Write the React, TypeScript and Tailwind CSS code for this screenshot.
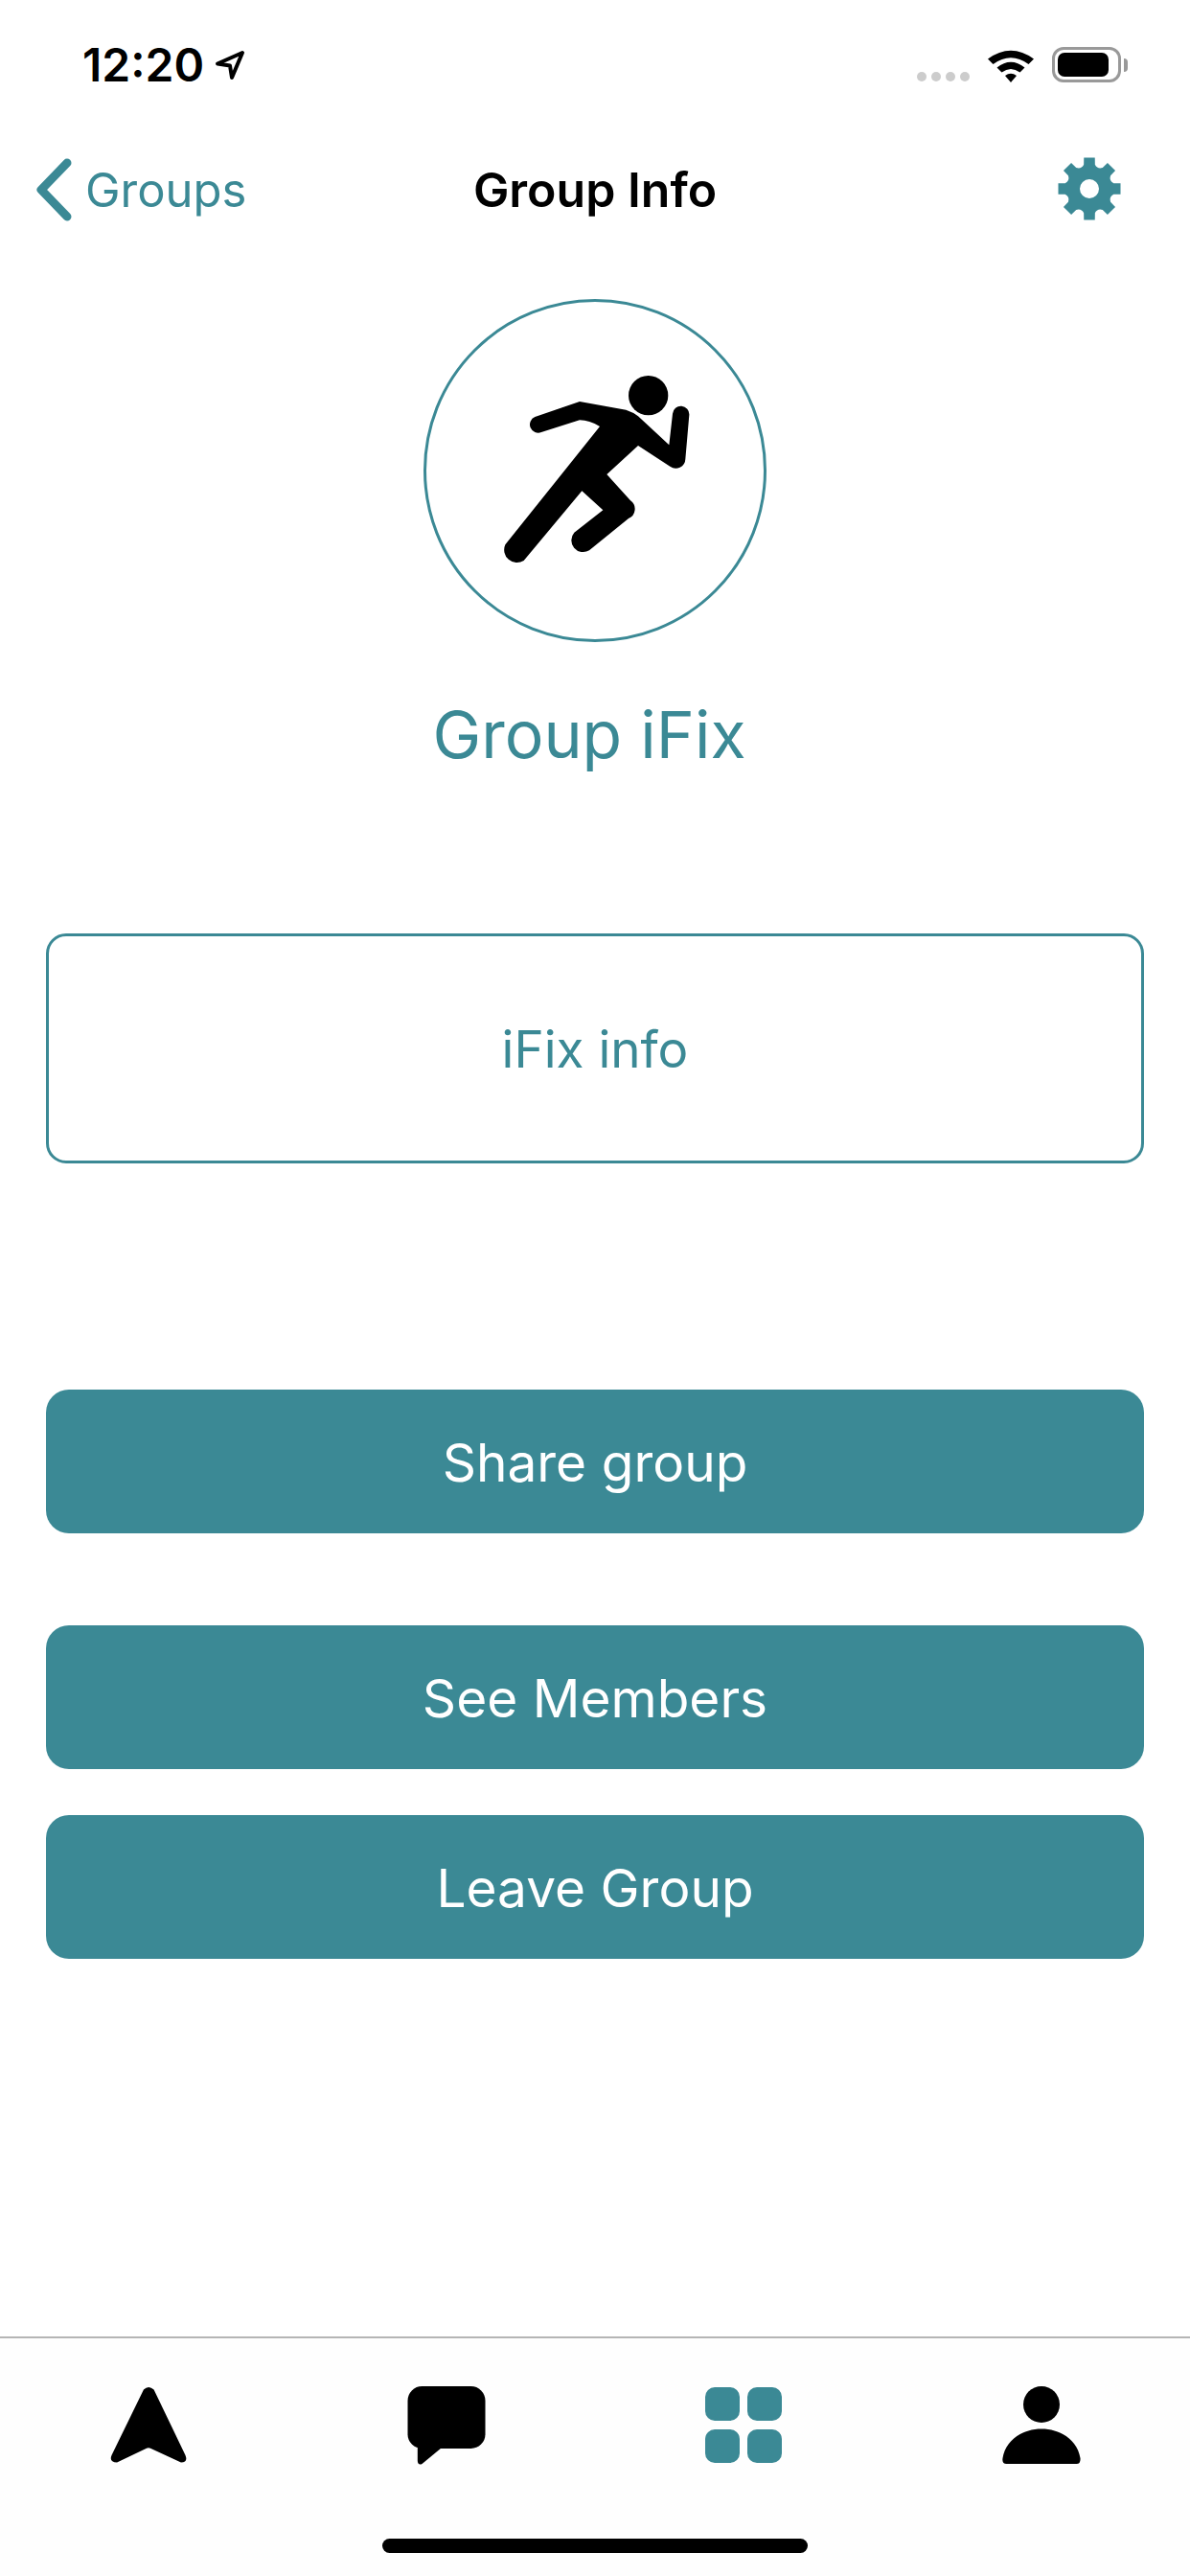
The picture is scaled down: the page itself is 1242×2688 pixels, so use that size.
const FONT = "font-['Inter','Liberation_Sans',sans-serif]";

function gearPath() {
  // 8 teeth round the centre of a 66 box
  const pt = (r: number, deg: number) => {
    const a = (deg * Math.PI) / 180;
    return `${(33 + r * Math.cos(a)).toFixed(2)} ${(33 + r * Math.sin(a)).toFixed(2)}`;
  };
  let d = "";
  for (let i = 0; i < 8; i++) {
    const c = i * 45 - 90;
    d += `${i === 0 ? "M" : "L"}${pt(26, c - 13)} L${pt(33, c - 10)} L${pt(33, c + 10)} L${pt(26, c + 13)} Q${pt(22, c + 22.5)} ${pt(26, c + 32)} `;
  }
  return `${d}Z M33 23 A10 10 0 1 0 33 43 A10 10 0 1 0 33 23 Z`;
}

function StatusBar() {
  return (
    <div className="flex h-[132px] items-start justify-between pl-[86px] pr-[65px] pt-[41px]">
      <div className="flex items-center gap-[11px]">
        <span className="text-[48px] leading-[54px] font-semibold text-black">12:20</span>
        <svg width="32" height="32" viewBox="0 0 32 32" fill="none">
          <path d="M29 3 L3 14.5 L16 16.5 L18 29 Z" stroke="#000" strokeWidth="4" strokeLinejoin="round" />
        </svg>
      </div>
      <div className="flex items-end gap-[19px] pt-[8px]">
        <div className="flex gap-[5px] pb-[1px]">
          <div className="size-[10px] rounded-full bg-[#cccccc]" />
          <div className="size-[10px] rounded-full bg-[#cccccc]" />
          <div className="size-[10px] rounded-full bg-[#cccccc]" />
          <div className="size-[10px] rounded-full bg-[#cccccc]" />
        </div>
        <svg width="48" height="36" viewBox="0 0 48 36" fill="none">
          <path d="M0 11.5 Q24 -6 48 11.5 L42.5 17 Q24 3.5 5.5 17 Z" fill="#000" />
          <path d="M9.5 20.5 Q24 9 38.5 20.5 L33.5 25.5 Q24 18.5 14.5 25.5 Z" fill="#000" />
          <path d="M18 29 Q24 24.5 30 29 L24 36 Z" fill="#000" />
        </svg>
        <div className="flex items-center gap-[3px]">
          <div className="flex h-[37px] w-[72px] items-center rounded-[12px] border-[3px] border-[#999999] pl-[3px]">
            <div className="h-[25px] w-[53px] rounded-[7px] bg-black" />
          </div>
          <div className="h-[14px] w-[4px] rounded-r-full bg-[#999999]" />
        </div>
      </div>
    </div>
  );
}

function NavBar() {
  return (
    <div className="grid h-[132px] grid-cols-3 items-center">
      <div className="flex items-center gap-[12px] pl-[37px]">
        <svg width="40" height="66" viewBox="0 0 40 66" fill="none">
          <path d="M33 5 L6 33 L33 61" stroke="#3b8995" strokeWidth="9" strokeLinecap="round" strokeLinejoin="round" />
        </svg>
        <span className="text-[49px] leading-none text-[#3b8995]">Groups</span>
      </div>
      <div className="text-center text-[50px] leading-none font-semibold text-black">Group Info</div>
      <div className="flex justify-end pb-[2px] pr-[72px]">
        <svg width="66" height="66" viewBox="0 0 66 66">
          <path d={gearPath()} fill="#3b8995" fillRule="evenodd" />
        </svg>
      </div>
    </div>
  );
}

function Runner() {
  return (
    <svg width="196" height="200" viewBox="312 298 588 600" className="ml-[2px]">
      <circle cx="770" cy="363" r="62" fill="#000" />
      <path
        d="M415 430 L555 382 L700 408 Q722 415 738 428 L835 518 L846 420 A26 26 0 0 1 898 424 L886 562 A30 30 0 0 1 838 585 L738 520 L640 610 L714 692 A32 32 0 0 1 708 748 L585 848 A37 37 0 0 1 538 792 L628 722 L562 662 L380 880 A40 40 0 0 1 322 830 L618 460 Q585 440 555 440 L435 478 A25 25 0 0 1 415 430 Z"
        fill="#000"
      />
    </svg>
  );
}

function ActionButton({ label, className }: { label: string; className: string }) {
  return (
    <button className={`flex h-[150px] w-full items-center justify-center rounded-[24px] bg-[#3b8995] pt-[3px] text-[55px] leading-none text-white ${className}`}>
      {label}
    </button>
  );
}

function TabBar() {
  return (
    <div className="mt-auto flex h-[250px] flex-col border-t-2 border-[#b5b5b5] bg-[#fefefe]">
      <div className="grid grid-cols-4 justify-items-center pt-[50px]">
        <svg width="80" height="80" viewBox="0 0 78 79">
          <path
            d="M34 3.5 Q39 -1.5 44.5 3.5 L77 71 Q80 78 72.5 78.5 L41 64 Q39 62.8 37 64 L6.5 78.5 Q-2 78 1 71 Z"
            fill="#000"
          />
        </svg>
        <svg width="82" height="82" viewBox="0 0 81 82">
          <rect x="0" y="0" width="81" height="65" rx="15" fill="#000" />
          <path d="M10.3 60 L10.3 78 Q11 83 15 81 L38 62 Z" fill="#000" />
        </svg>
        <svg width="80" height="80" viewBox="0 0 80 80" fill="#3b8995">
          <rect x="0" y="1" width="36" height="35" rx="10" />
          <rect x="44" y="1" width="36" height="35" rx="10" />
          <rect x="0" y="45" width="36" height="35" rx="10" />
          <rect x="44" y="45" width="36" height="35" rx="10" />
        </svg>
        <svg width="82" height="82" viewBox="0 0 81 82" fill="#000">
          <ellipse cx="40.5" cy="19" rx="19" ry="19" />
          <path d="M4 81 Q-1 81 0 75 C3 56 21 44.5 40.5 44.5 C60 44.5 78 56 81 75 Q81.5 81 77 81 Z" />
        </svg>
      </div>
      <div className="mx-auto mt-[77px] h-[15px] w-[444px] rounded-full bg-black" />
    </div>
  );
}

export default function App() {
  return (
    <div className={`flex h-[2688px] w-[1242px] flex-col bg-white ${FONT}`}>
      <StatusBar />
      <NavBar />
      <div className="flex flex-col items-center px-[48px] pt-[48px]">
        <div className="flex size-[358px] items-center justify-center rounded-full border-[3px] border-[#3b8995]">
          <Runner />
        </div>
        <div className="mt-[54px] pr-[12px] text-[68px] leading-[84px] text-[#3b8995]">Group iFix</div>
        <div className="mt-[166px] flex h-[240px] w-full items-center justify-center rounded-[21px] border-[3px] border-[#3b8995] pt-[2px] text-[53px] leading-none text-[#3b8995]">
          iFix info
        </div>
        <ActionButton label="Share group" className="mt-[236px]" />
        <ActionButton label="See Members" className="mt-[96px]" />
        <ActionButton label="Leave Group" className="mt-[48px]" />
      </div>
      <TabBar />
    </div>
  );
}
